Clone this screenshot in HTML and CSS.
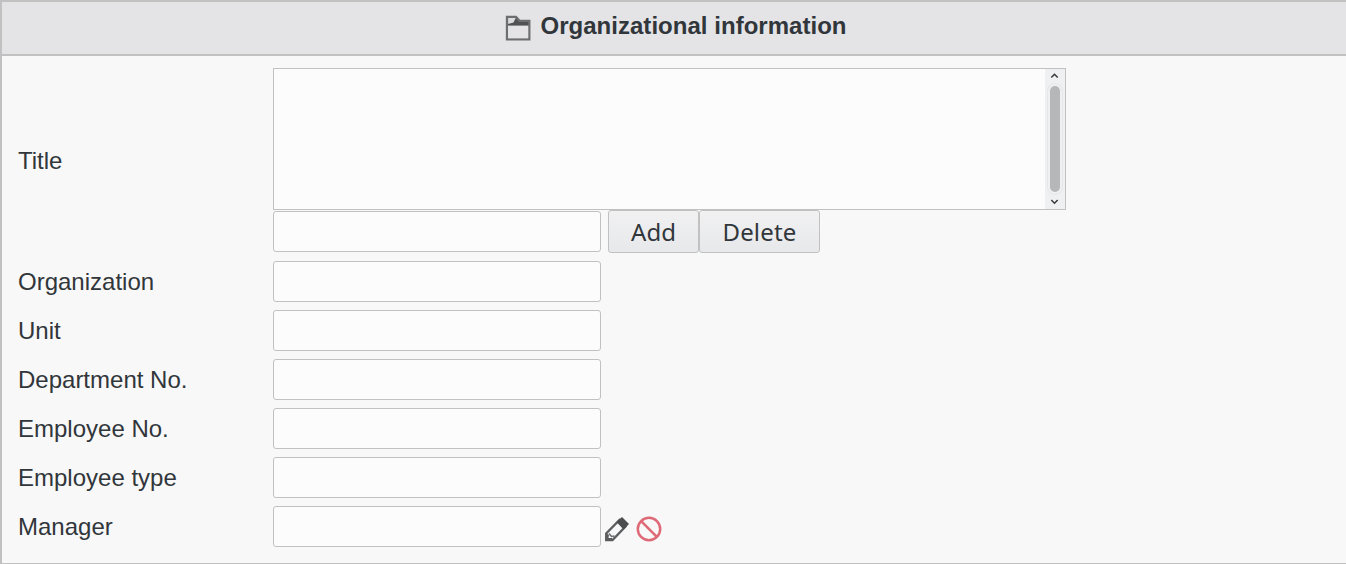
FILE: index.html
```html
<!DOCTYPE html>
<html lang="en">
<head>
<meta charset="utf-8">
<title>Organizational information</title>
<link rel="stylesheet" href="styles.css">
</head>
<body>
<section class="panel">
  <h3 class="panel-title">
    <svg class="icon-folder" width="26" height="26" viewBox="0 0 26 26"><path d="M2 11V2H10.5L14 5.5H24.5V11Z" fill="#505254"/><path d="M2.5 2.5H11L8.5 7.5L2.5 9Z" fill="#dcdcdd"/><path d="M2 1.8H11L14.5 5.8H24.3V24.3H2Z" fill="none" stroke="#6d6e70" stroke-width="2.3"/><path d="M3.1 10.6H23.2V23.2H3.1Z" fill="#e4e4e6"/></svg>
    <span>Organizational information</span>
  </h3>
  <form class="fields">
    <div class="row row-title">
      <label for="title">Title</label>
      <div class="title-control">
        <div class="list">
          <div class="scrollbar">
            <svg width="20" height="15" viewBox="0 0 20 15"><path d="M6.3 8.5L9.5 5.3L12.7 8.5" fill="none" stroke="#34393d" stroke-width="1.5"/></svg>
            <div class="thumb"></div>
            <svg width="20" height="15" viewBox="0 0 20 15"><path d="M6.3 6L9.5 9.2L12.7 6" fill="none" stroke="#34393d" stroke-width="1.5"/></svg>
          </div>
        </div>
        <div class="entry"><input id="title" type="text"><div class="buttons"><button type="button">Add</button><button type="button">Delete</button></div></div>
      </div>
    </div>
    <div class="row"><label for="o">Organization</label><input id="o" type="text"></div>
    <div class="row"><label for="ou">Unit</label><input id="ou" type="text"></div>
    <div class="row"><label for="dep">Department No.</label><input id="dep" type="text"></div>
    <div class="row"><label for="num">Employee No.</label><input id="num" type="text"></div>
    <div class="row"><label for="type">Employee type</label><input id="type" type="text"></div>
    <div class="row"><label for="manager">Manager</label><input id="manager" type="text">
      <div class="actions">
        <svg width="26" height="26" viewBox="0 0 26 26"><path d="M2.2 24V17.5L15.5 4L21.5 10.5L8.5 24Z" fill="#f7f7f7" stroke="#5b5d5f" stroke-width="2.3"/><path d="M12.5 6L18 1L25 8L19.5 13.5Z" fill="#4b4d4f"/><path d="M2 17L5 19L4.5 22L8 22L8.5 24.5L1.5 25Z" fill="#5b5d5f"/><path d="M5 17.5L7.5 20.5L10.5 20" fill="none" stroke="#6d6f71" stroke-width="1.6"/></svg>
        <svg width="26" height="26" viewBox="0 0 26 26"><circle cx="13" cy="13" r="11.2" fill="none" stroke="#df6a77" stroke-width="2.5"/><path d="M5.2 5.2L20.8 20.8" stroke="#df6a77" stroke-width="2.6"/></svg>
      </div>
    </div>
  </form>
</section>
</body>
</html>
```
FILE: styles.css
```css
* { box-sizing: border-box; }
body {
  margin: 0;
  overflow: hidden;
  background: #f8f8f8;
  color: #31363b;
  font: 24px/28px "Liberation Sans", Arial, sans-serif;
}
.panel {
  height: 564px;
  border: 2px solid #c1c1c2;
  border-right: 0;
  border-bottom-width: 1px;
}
.panel-title {
  display: flex;
  justify-content: center;
  gap: 9px;
  height: 54px;
  margin: 0;
  padding: 10px 0 0 4px;
  border-bottom: 2px solid #c1c1c2;
  background: #e4e4e6;
  font-size: 24px;
  letter-spacing: 0.03px;
}
.icon-folder { margin-top: 3px; }
.fields {
  display: flex;
  flex-direction: column;
  gap: 8px;
  padding: 12px 0 0 16px;
}
.row {
  display: flex;
  align-items: center;
  height: 41px;
}
.row label { width: 255px; flex: none; }
.row-title { height: 185px; }
input {
  width: 328px;
  height: 41px;
  margin: 0;
  padding: 0 8px;
  border: 1px solid #c1c1c2;
  border-radius: 3px;
  background: #fcfcfc;
  color: inherit;
  font: inherit;
}
.list {
  display: flex;
  justify-content: flex-end;
  width: 793px;
  height: 142px;
  border: 1px solid #c1c1c2;
  background: #fcfcfc;
}
.scrollbar {
  display: flex;
  flex-direction: column;
  align-items: center;
  width: 20px;
  background: #eff0f1;
}
.thumb {
  flex: 1;
  width: 10px;
  margin: 2px 0;
  border-radius: 5px;
  background: #b6b7b8;
  box-shadow: 0 0 0 2px #eff0f1, 0 0 0 3px #e6e7e8;
}
.entry { display: flex; align-items: center; height: 43px; }
.buttons { display: flex; margin-left: 7px; }
button {
  width: 91px;
  height: 43px;
  margin: 0;
  padding: 0;
  border: 1px solid #c1c1c2;
  border-radius: 3px;
  background: linear-gradient(#f1f1f2, #e7e8ea);
  color: inherit;
  font: 24px/33px "Noto Sans", sans-serif;
}
button + button { width: 121px; letter-spacing: 0.2px; }
.actions { display: flex; gap: 6px; margin: 5px 0 0 3px; }
```
